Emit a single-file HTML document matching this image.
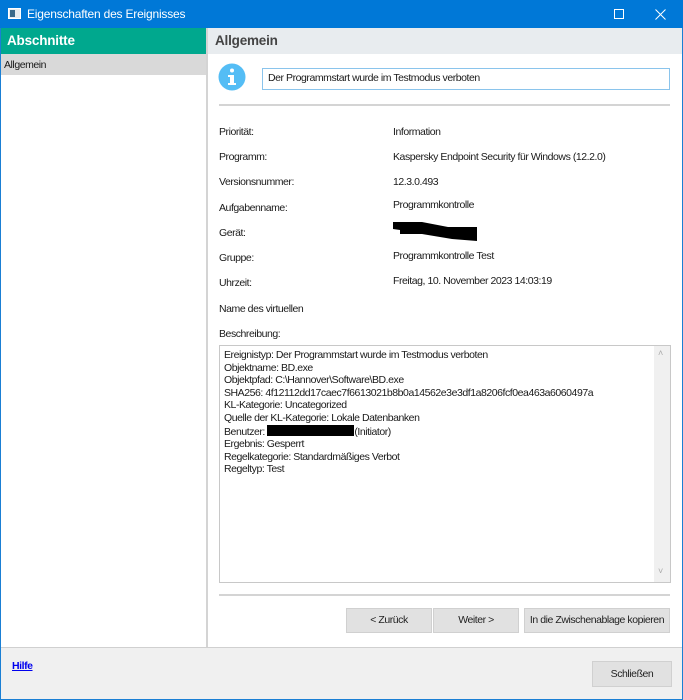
<!DOCTYPE html>
<html><head><meta charset="utf-8"><style>
*{margin:0;padding:0;box-sizing:border-box}
body{width:683px;height:700px;overflow:hidden;background:#fff;font-family:"Liberation Sans",sans-serif;font-size:10.5px;letter-spacing:-0.45px;color:#1a1a1a;position:relative}
.a{position:absolute;white-space:nowrap}
.btn{position:absolute;background:#e1e1e1;border:1px solid #d0d0d0;text-align:center;line-height:22px;color:#222}
</style></head><body>
<div class="a" style="left:0;top:0;width:683px;height:700px;border:1px solid #1a7fd4"></div>
<div class="a" style="left:0;top:0;width:683px;height:28px;background:#0078d7"></div>
<div class="a" style="left:8px;top:8px;width:13px;height:11px;background:#e8ecef;border:1px solid #fff"><div style="position:absolute;left:1px;top:1px;width:5px;height:7px;background:#3a6a8a"></div></div>
<div class="a" style="left:27px;top:7px;color:#fff;font-size:12px;letter-spacing:-0.2px">Eigenschaften des Ereignisses</div>
<div class="a" style="left:614px;top:9px;width:10px;height:10px;border:1px solid #fff"></div>
<svg class="a" style="left:655px;top:9px" width="11" height="11"><path d="M0.5 0.5L10.5 10.5M10.5 0.5L0.5 10.5" stroke="#fff" stroke-width="1"/></svg>
<div class="a" style="left:1px;top:28px;width:205px;height:26px;background:#00a88e"></div>
<div class="a" style="left:7px;top:33px;color:#fff;font-weight:bold;font-size:13.5px;letter-spacing:-0.2px">Abschnitte</div>
<div class="a" style="left:1px;top:54px;width:205px;height:21px;background:#d9d9d9"></div>
<div class="a" style="left:4px;top:59px">Allgemein</div>
<div class="a" style="left:206px;top:28px;width:2px;height:619px;background:#d4d4d4"></div>
<div class="a" style="left:208px;top:28px;width:474px;height:26px;background:#e8ecef"></div>
<div class="a" style="left:215px;top:33px;color:#444;font-weight:bold;font-size:13.5px;letter-spacing:-0.2px">Allgemein</div>
<svg class="a" style="left:218px;top:62px" width="28" height="30"><circle cx="14" cy="15" r="13.5" fill="#54bdf5"/><rect x="12" y="13" width="4" height="10" fill="#fff"/><rect x="10" y="13" width="4" height="2" fill="#fff"/><rect x="10" y="21" width="8" height="2" fill="#fff"/><circle cx="14" cy="8.5" r="2" fill="#fff"/></svg>
<div class="a" style="left:262px;top:68px;width:408px;height:22px;border:1px solid #8ac4ec;padding:3px 0 0 5px">Der Programmstart wurde im Testmodus verboten</div>
<div class="a" style="left:219px;top:104px;width:451px;height:2px;background:#d4d4d4"></div>
<div class="a" style="left:219px;top:126px">Priorität:</div><div class="a" style="left:393px;top:126px">Information</div>
<div class="a" style="left:219px;top:151px">Programm:</div><div class="a" style="left:393px;top:151px">Kaspersky Endpoint Security für Windows (12.2.0)</div>
<div class="a" style="left:219px;top:176px">Versionsnummer:</div><div class="a" style="left:393px;top:176px">12.3.0.493</div>
<div class="a" style="left:219px;top:202px">Aufgabenname:</div><div class="a" style="left:393px;top:199px">Programmkontrolle</div>
<div class="a" style="left:219px;top:227px">Gerät:</div>
<svg class="a" style="left:392px;top:221px" width="86" height="22"><path d="M1 1H30L56 6H85V20L60 18L30 13H8V9L1 8Z" fill="#000"/></svg>
<div class="a" style="left:219px;top:252px">Gruppe:</div><div class="a" style="left:393px;top:250px">Programmkontrolle Test</div>
<div class="a" style="left:219px;top:277px">Uhrzeit:</div><div class="a" style="left:393px;top:275px">Freitag, 10. November 2023 14:03:19</div>
<div class="a" style="left:219px;top:303px">Name des virtuellen</div>
<div class="a" style="left:219px;top:328px">Beschreibung:</div>
<div class="a" style="left:219px;top:345px;width:452px;height:238px;border:1px solid #c8c8c8"></div>
<div class="a" style="left:654px;top:346px;width:16px;height:236px;background:#f0f0f0"></div>
<div class="a" style="left:658px;top:348px;color:#aaa;font-size:9px">&#708;</div>
<div class="a" style="left:658px;top:566px;color:#aaa;font-size:9px">&#709;</div>
<div class="a" style="left:224px;top:349px;line-height:12.6px">Ereignistyp: Der Programmstart wurde im Testmodus verboten<br>Objektname: BD.exe<br>Objektpfad: C:\Hannover\Software\BD.exe<br>SHA256: 4f12112dd17caec7f6613021b8b0a14562e3e3df1a8206fcf0ea463a6060497a<br>KL-Kategorie: Uncategorized<br>Quelle der KL-Kategorie: Lokale Datenbanken<br>Benutzer: <span style="display:inline-block;width:87px;height:11px;background:#000;vertical-align:-1px"></span>(Initiator)<br>Ergebnis: Gesperrt<br>Regelkategorie: Standardmäßiges Verbot<br>Regeltyp: Test</div>
<div class="a" style="left:219px;top:594px;width:451px;height:2px;background:#d4d4d4"></div>
<div class="btn" style="left:346px;top:608px;width:86px;height:25px">&lt; Zurück</div>
<div class="btn" style="left:433px;top:608px;width:86px;height:25px">Weiter &gt;</div>
<div class="btn" style="left:524px;top:608px;width:146px;height:25px">In die Zwischenablage kopieren</div>
<div class="a" style="left:1px;top:647px;width:681px;height:52px;background:#f0f0f0;border-top:1px solid #d0d0d0"></div>
<div class="a" style="left:12px;top:660px;color:#0000ee;font-weight:bold;text-decoration:underline">Hilfe</div>
<div class="btn" style="left:592px;top:661px;width:80px;height:26px;line-height:24px">Schließen</div>
</body></html>
